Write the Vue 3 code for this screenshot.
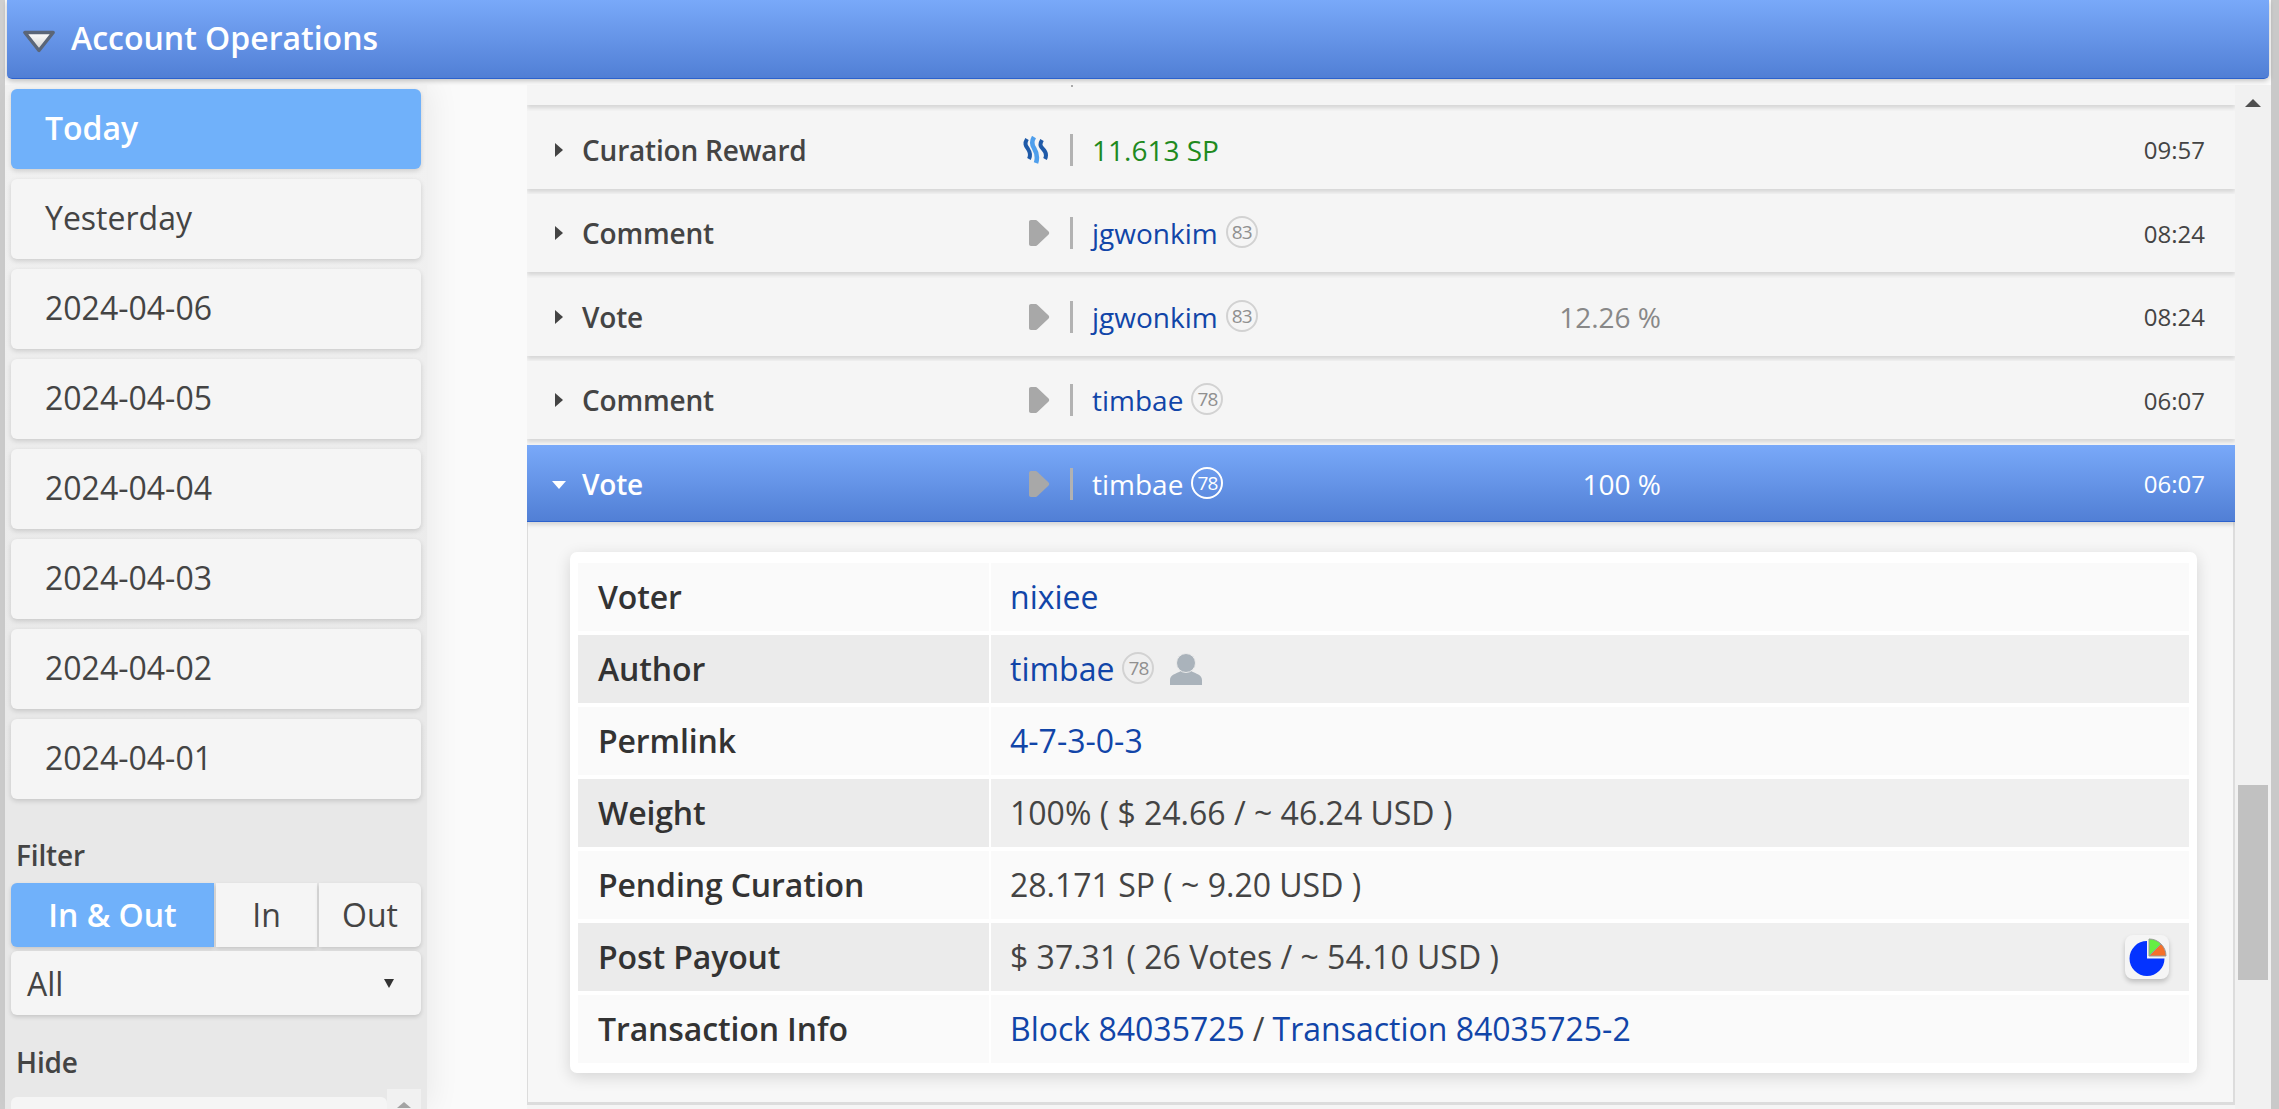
<script setup>
const days = ['Today', 'Yesterday', '2024-04-06', '2024-04-05', '2024-04-04', '2024-04-03', '2024-04-02', '2024-04-01']
const ops = [
  { label: 'Curation Reward', kind: 'steem', value: '11.613 SP', time: '09:57' },
  { label: 'Comment', kind: 'play', user: 'jgwonkim', rep: 83, time: '08:24' },
  { label: 'Vote', kind: 'play', user: 'jgwonkim', rep: 83, pct: '12.26 %', time: '08:24' },
  { label: 'Comment', kind: 'play', user: 'timbae', rep: 78, time: '06:07' },
  { label: 'Vote', kind: 'play', user: 'timbae', rep: 78, pct: '100 %', time: '06:07', open: true }
]
</script>

<template>
  <div class="page">
    <div class="edge-left"></div>
    <div class="panel">
      <header class="head">
        <svg class="head-tri" width="34" height="24" viewBox="0 0 34 24">
          <defs>
            <linearGradient id="triFill" x1="0" y1="0" x2="0" y2="1">
              <stop offset="0" stop-color="#ffffff" />
              <stop offset="1" stop-color="#cfcfcf" />
            </linearGradient>
          </defs>
          <path d="M2.8 3.5H31.2L17 21.5Z" fill="url(#triFill)" stroke="#5b6678" stroke-width="3.4" stroke-linejoin="round" />
        </svg>
        <span class="head-title">Account Operations</span>
      </header>
      <div class="content">
        <aside class="side">
          <button v-for="(d, i) in days" :key="d" class="day" :class="{ active: i === 0 }">{{ d }}</button>
          <div class="side-label filter-label">Filter</div>
          <div class="seg">
            <span class="seg-item seg-a active">In &amp; Out</span>
            <span class="seg-item seg-b">In</span>
            <span class="seg-item seg-c">Out</span>
          </div>
          <div class="select"><span>All</span><i class="select-caret"></i></div>
          <div class="side-label hide-label">Hide</div>
          <div class="hide-row">
            <div class="hide-box"></div>
            <div class="hide-btn"><i class="hide-up"></i></div>
          </div>
        </aside>
        <main class="list">
          <div class="stub"><i class="stub-tick"></i></div>
          <div v-for="(o, i) in ops" :key="i" class="row" :class="{ open: o.open }">
            <i class="caret"></i>
            <span class="row-label">{{ o.label }}</span>
            <span class="row-icon">
              <svg v-if="o.kind === 'steem'" class="steem" width="27" height="28" viewBox="0 0 27 28" fill="none">
                <path d="M4 3C1 8 3 10 5 13C7 16 8 19 6 23" stroke="#1f5aa8" stroke-width="4" />
                <path d="M11 1C8 6 9 9 11 12C14 17 15 21 13 27" stroke="#4f9fec" stroke-width="4.6" />
                <path d="M19 4C16 9 18 11 20 13C23 16 24 19 22 23" stroke="#1f5aa8" stroke-width="4" />
              </svg>
              <svg v-else class="play" width="22" height="28" viewBox="0 0 22 28">
                <path d="M3 1H7C8.2 1 9 1.5 9.8 2.3L20.6 12.5C21.4 13.4 21.4 14.6 20.6 15.5L9.8 25.7C9 26.5 8.2 27 7 27H3C1.8 27 1 26.2 1 25V3C1 1.8 1.8 1 3 1Z" fill="#a8a8a8" />
              </svg>
            </span>
            <i class="sep"></i>
            <span class="row-main">
              <span v-if="o.value" class="green">{{ o.value }}</span>
              <template v-else>
                <a class="link">{{ o.user }}</a>
                <span class="rep">{{ o.rep }}</span>
              </template>
            </span>
            <span class="row-pct">{{ o.pct }}</span>
            <span class="row-time">{{ o.time }}</span>
          </div>
          <section class="detail">
            <div class="card">
              <div class="tr"><div class="th">Voter</div><div class="td"><a class="link">nixiee</a></div></div>
              <div class="tr alt">
                <div class="th">Author</div>
                <div class="td">
                  <a class="link">timbae</a><span class="rep">78</span>
                  <svg class="user" width="32" height="32" viewBox="0 0 32 32">
                    <path d="M0 32V27C0 22 6 20.5 11 18H21C26 20.5 32 22 32 27V32Z" fill="#aab3bb" />
                    <circle cx="16" cy="10" r="9.5" fill="#aab3bb" stroke="#ebebeb" stroke-width="1" />
                  </svg>
                </div>
              </div>
              <div class="tr"><div class="th">Permlink</div><div class="td"><a class="link">4-7-3-0-3</a></div></div>
              <div class="tr alt"><div class="th">Weight</div><div class="td">100% ( $ 24.66 / ~ 46.24 USD )</div></div>
              <div class="tr"><div class="th">Pending Curation</div><div class="td">28.171 SP ( ~ 9.20 USD )</div></div>
              <div class="tr alt">
                <div class="th">Post Payout</div>
                <div class="td">
                  <span>$ 37.31 ( 26 Votes / ~ 54.10 USD )</span>
                  <span class="pie-btn">
                    <svg width="38" height="38" viewBox="0 0 38 38">
                      <path d="M18 20.5V3A17.5 17.5 0 1 0 35.5 20.5Z" fill="#0433ff" />
                      <path d="M20 18V1A17 17 0 0 1 32 6Z" fill="#66ee44" stroke="#999" stroke-width="1" />
                      <path d="M20 18L32 6A17 17 0 0 1 37 18Z" fill="#f5702a" stroke="#999" stroke-width="1" />
                    </svg>
                  </span>
                </div>
              </div>
              <div class="tr"><div class="th">Transaction Info</div><div class="td"><a class="link">Block 84035725</a><span class="slash">/</span><a class="link">Transaction 84035725-2</a></div></div>
            </div>
          </section>
        </main>
        <div class="scroll">
          <i class="scroll-up"></i>
          <div class="thumb"></div>
        </div>
      </div>
    </div>
    <div class="edge-right"></div>
  </div>
</template>

<style>
html, body { margin: 0; padding: 0; overflow: hidden; }
</style>

<style scoped>
.page {
  display: flex;
  width: 2279px;
  height: 1109px;
  overflow: hidden;
  background: #fafafa;
  font-family: "Open Sans", "Liberation Sans", sans-serif;
  color: #444;
}
.edge-left { width: 5px; flex: none; background: #cfcfcf; }
.edge-right { width: 8px; flex: none; background: #c9c9c9; }
.panel { flex: 1; min-width: 0; display: flex; flex-direction: column; }
.head {
  height: 79px;
  flex: none;
  margin: 0 2px;
  box-sizing: border-box;
  display: flex;
  align-items: center;
  padding-left: 15px;
  border-radius: 0 0 5px 5px;
  border-bottom: 1px solid #2c62cd;
  background: linear-gradient(#79a9f9, #517fd5);
  box-shadow: 0 2px 5px rgba(0, 0, 0, .22);
  position: relative;
  z-index: 2;
}
.head-tri { flex: none; margin-top: 3px; }
.head-title { margin: 0 0 3px 15px; color: #fff; font-size: 32px; font-weight: 600; }
.content { flex: 1; min-height: 0; display: flex; margin-top: 6px; }

.side {
  width: 422px;
  flex: none;
  box-sizing: border-box;
  padding: 4px 6px 0;
  background: linear-gradient(#f2f2f2, #e8e8e8 700px);
  box-shadow: 3px 0 30px rgba(0, 0, 0, .07);
  display: flex;
  flex-direction: column;
}
.day {
  height: 80px;
  flex: none;
  margin: 0 0 10px;
  padding: 0 0 4px 34px;
  border: 0;
  border-radius: 6px;
  background: #f5f5f5;
  box-shadow: 0 2px 5px rgba(0, 0, 0, .15);
  text-align: left;
  font: 400 32px "Open Sans", sans-serif;
  color: #444;
}
.day.active { background: #70b1fa; color: #fff; font-weight: 600; }
.side-label { font-size: 28px; font-weight: 600; letter-spacing: -.15px; color: #444; line-height: 36px; padding-left: 5px; }
.filter-label { margin-top: 28px; }
.seg { display: flex; gap: 2px; margin-top: 10px; height: 64px; flex: none; }
.seg-item {
  display: flex;
  align-items: center;
  justify-content: center;
  padding-bottom: 2px;
  box-sizing: border-box;
  background: #f5f5f5;
  box-shadow: 0 2px 4px rgba(0, 0, 0, .15);
  font-size: 32px;
}
.seg-a { width: 203px; border-radius: 6px 0 0 6px; }
.seg-a.active { background: #70b1fa; color: #fff; font-weight: 600; }
.seg-b { width: 101px; }
.seg-c { width: 102px; border-radius: 0 6px 6px 0; }
.select {
  height: 64px;
  flex: none;
  margin-top: 4px;
  box-sizing: border-box;
  display: flex;
  align-items: center;
  justify-content: space-between;
  padding: 0 27px 0 16px;
  background: #f5f5f5;
  border-radius: 6px;
  box-shadow: 0 2px 4px rgba(0, 0, 0, .15);
  font-size: 32px;
}
.select-caret { width: 0; height: 0; border: 5px solid transparent; border-top: 9px solid #333; border-bottom: 0; }
.hide-label { margin-top: 29px; }
.hide-row { display: flex; margin-top: 9px; height: 60px; flex: none; }
.hide-box { flex: 1; margin-top: 8px; background: #f5f5f5; border-radius: 6px 6px 0 0; }
.hide-btn { width: 34px; background: #f1f1f1; display: flex; justify-content: center; }
.hide-up { width: 0; height: 0; margin-top: 13px; border: 6px solid transparent; border-bottom: 6px solid #a3a3a3; border-top: 0; border-left-width: 7px; border-right-width: 7px; }

.list { width: 1708px; margin-left: 100px; flex: none; overflow: hidden; font-size: 28px; background: #f5f5f5; }
.stub {
  height: 20px;
  background: #f5f5f5;
  box-shadow: 0 3px 4px rgba(0, 0, 0, .13);
  margin-bottom: 6px;
  padding-left: 544px;
}
.stub-tick { display: block; width: 2px; height: 2px; background: #aaa; }
.row {
  height: 77.6px;
  margin-bottom: 5.9px;
  display: flex;
  align-items: center;
  background: #f5f5f5;
  box-shadow: 0 3px 4px rgba(0, 0, 0, .13);
  position: relative;
}
.caret { margin-left: 28px; width: 0; height: 0; border: 7px solid transparent; border-left: 8px solid #444; border-right: 0; flex: none; }
.row-label { width: 443px; margin-left: 19px; font-weight: 600; letter-spacing: -.2px; font-size: 28px; flex: none; }
.row-icon { width: 45px; flex: none; display: flex; align-items: center; }
.steem { margin-left: -2px; }
.play { margin-left: 3px; }
.sep { width: 3px; height: 32px; background: #b2b2b2; flex: none; }
.row-main { width: 400px; margin-left: 19px; flex: none; display: flex; align-items: center; }
.row-pct { width: 169px; text-align: right; color: #888; flex: none; font-size: 28px; }
.row-time { margin-left: auto; margin-right: 30px; font-size: 24px; }
.green { color: #1f8a1f; }
.link { color: #1145a8; }
.rep {
  display: inline-flex;
  align-items: center;
  justify-content: center;
  width: 32px;
  height: 32px;
  margin: -2px 0 0 8px;
  box-sizing: border-box;
  border: 2px solid #d2d2d2;
  border-radius: 50%;
  font-size: 19px;
  letter-spacing: -1px;
  color: #909090;
  flex: none;
}
.row.open { height: 77px; padding-top: 2px; background: linear-gradient(#79a9f9, #517fd5); border-bottom: 1px solid #2c62cd; box-sizing: border-box; margin-bottom: 0; color: #fff; }
.row.open .caret { margin-left: 25px; margin-top: 2px; border: 7px solid transparent; border-top: 8px solid #fff; border-bottom: 0; }
.row.open .row-label { margin-left: 16px; }
.row.open .link, .row.open .rep, .row.open .row-pct { color: #fff; }
.row.open .rep { border-color: #fff; }

.detail {
  box-sizing: border-box;
  height: 583px;
  padding: 30px 36px 0 42px;
  background: #f7f7f7;
  border: solid #dcdcdc;
  border-width: 0 2px 3px 1px;
}
.card {
  box-sizing: border-box;
  height: 521px;
  padding: 11px 8px 10px;
  background: #fff;
  border-radius: 7px;
  box-shadow: 0 4px 16px rgba(0, 0, 0, .14);
  display: flex;
  flex-direction: column;
  gap: 4px;
}
.tr { height: 68px; flex: none; display: flex; gap: 2px; background: #fff; }
.th, .td { background: #fafafa; display: flex; align-items: center; }
.th { width: 411px; flex: none; box-sizing: border-box; padding-left: 20px; font-weight: 600; letter-spacing: -.12px; font-size: 32px; color: #333; }
.td { flex: 1; padding: 0 20px 0 19px; font-size: 32px; }
.alt .th { background: #ebebeb; }
.alt .td { background: #efefef; }
.slash { margin: 0 8px; }
.user { margin-left: 16px; }
.pie-btn {
  margin-left: auto;
  width: 44px;
  height: 44px;
  box-sizing: border-box;
  padding: 3px 3px 3px 4px;
  border-radius: 8px;
  background: #f5f5f5;
  box-shadow: 0 3px 5px rgba(0, 0, 0, .2);
}
.pie-btn svg { display: block; }

.scroll { width: 36px; flex: none; background: #f1f1f1; display: flex; flex-direction: column; align-items: center; }
.scroll-up { width: 0; height: 0; margin-top: 14px; border: 8px solid transparent; border-bottom: 8px solid #505050; border-top: 0; }
.thumb { width: 30px; height: 195px; margin-top: 678px; background: #c1c1c1; }
</style>
